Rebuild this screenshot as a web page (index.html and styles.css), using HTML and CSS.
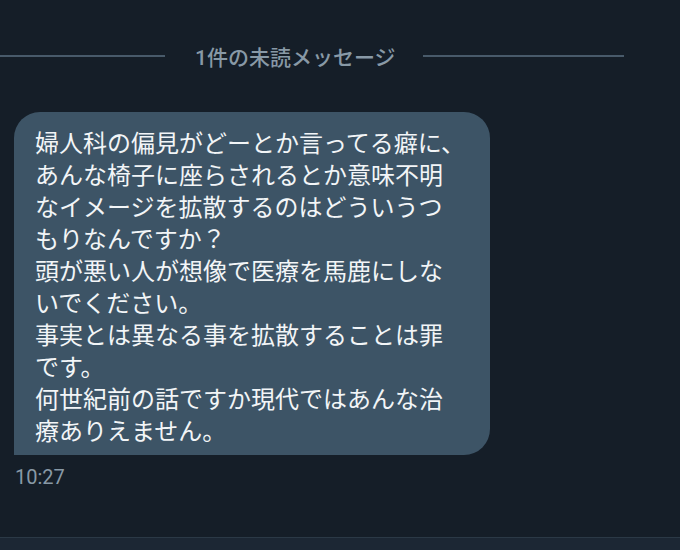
FILE: index.html
```html
<!DOCTYPE html>
<html lang="ja">

<head>
  <meta charset="UTF-8">
  <meta name="viewport" content="width=device-width, initial-scale=1.0">
  <title>メッセージ</title>
  <link rel="stylesheet" href="styles.css">
</head>

<body>
  <main class="thread">
    <div class="unread-divider">
      <span class="unread-line left"></span>
      <span class="unread-label">1件の未読メッセージ</span>
      <span class="unread-line right"></span>
    </div>

    <div class="message received">
      <div class="bubble">
        婦人科の偏見がどーとか言ってる癖に、<br>
        あんな椅子に座らされるとか意味不明<br>
        なイメージを拡散するのはどういうつ<br>
        もりなんですか？<br>
        頭が悪い人が想像で医療を馬鹿にしな<br>
        いでください。<br>
        事実とは異なる事を拡散することは罪<br>
        です。<br>
        何世紀前の話ですか現代ではあんな治<br>
        療ありえません。
      </div>
      <div class="time">10:27</div>
    </div>
  </main>

  <footer class="composer"></footer>
</body>
</html>
```

FILE: styles.css
```css
:root {
  --bg: #151e28;
  --bubble: #3d5466;
  --text: #f2f5f7;
  --muted: #8899a6;
  --rule: #485a6a;
}
html {
  font-family: Roboto, "Noto Sans CJK JP", sans-serif;
}
body {
  margin: 0;
  height: 550px;
  background: var(--bg);
  color: var(--text);
  display: flex;
  flex-direction: column;
  overflow: hidden;
}
.thread { flex: 1; }

/* 未読の区切り線 */
.unread-divider {
  display: flex;
  align-items: center;
  height: 30px;
  margin-top: 41px;
}
.unread-line {
  height: 2px;
  background: var(--rule);
}
.unread-line.left { width: 165px; }
.unread-line.right { width: 201px; }
.unread-label {
  margin: 0 27px 0 30px;
  font-size: 21px;
  font-weight: 500;
  color: var(--muted);
  white-space: nowrap;
}

/* 受信メッセージ */
.message { margin: 41px 0 0 14px; }
.bubble {
  width: 476px;
  box-sizing: border-box;
  padding: 14px 0 9px 21px;
  background: var(--bubble);
  border-radius: 26px 26px 26px 0;
  font-family: "Noto Sans CJK JP", sans-serif;
  font-size: 24px;
  line-height: 32px;
  white-space: nowrap;
}
.time {
  margin: 10px 0 0 1px;
  font-size: 20px;
  color: var(--muted);
}

.composer {
  height: 12px;
  border-top: 1px solid #2b3946;
  background: #1c2734;
}
```
